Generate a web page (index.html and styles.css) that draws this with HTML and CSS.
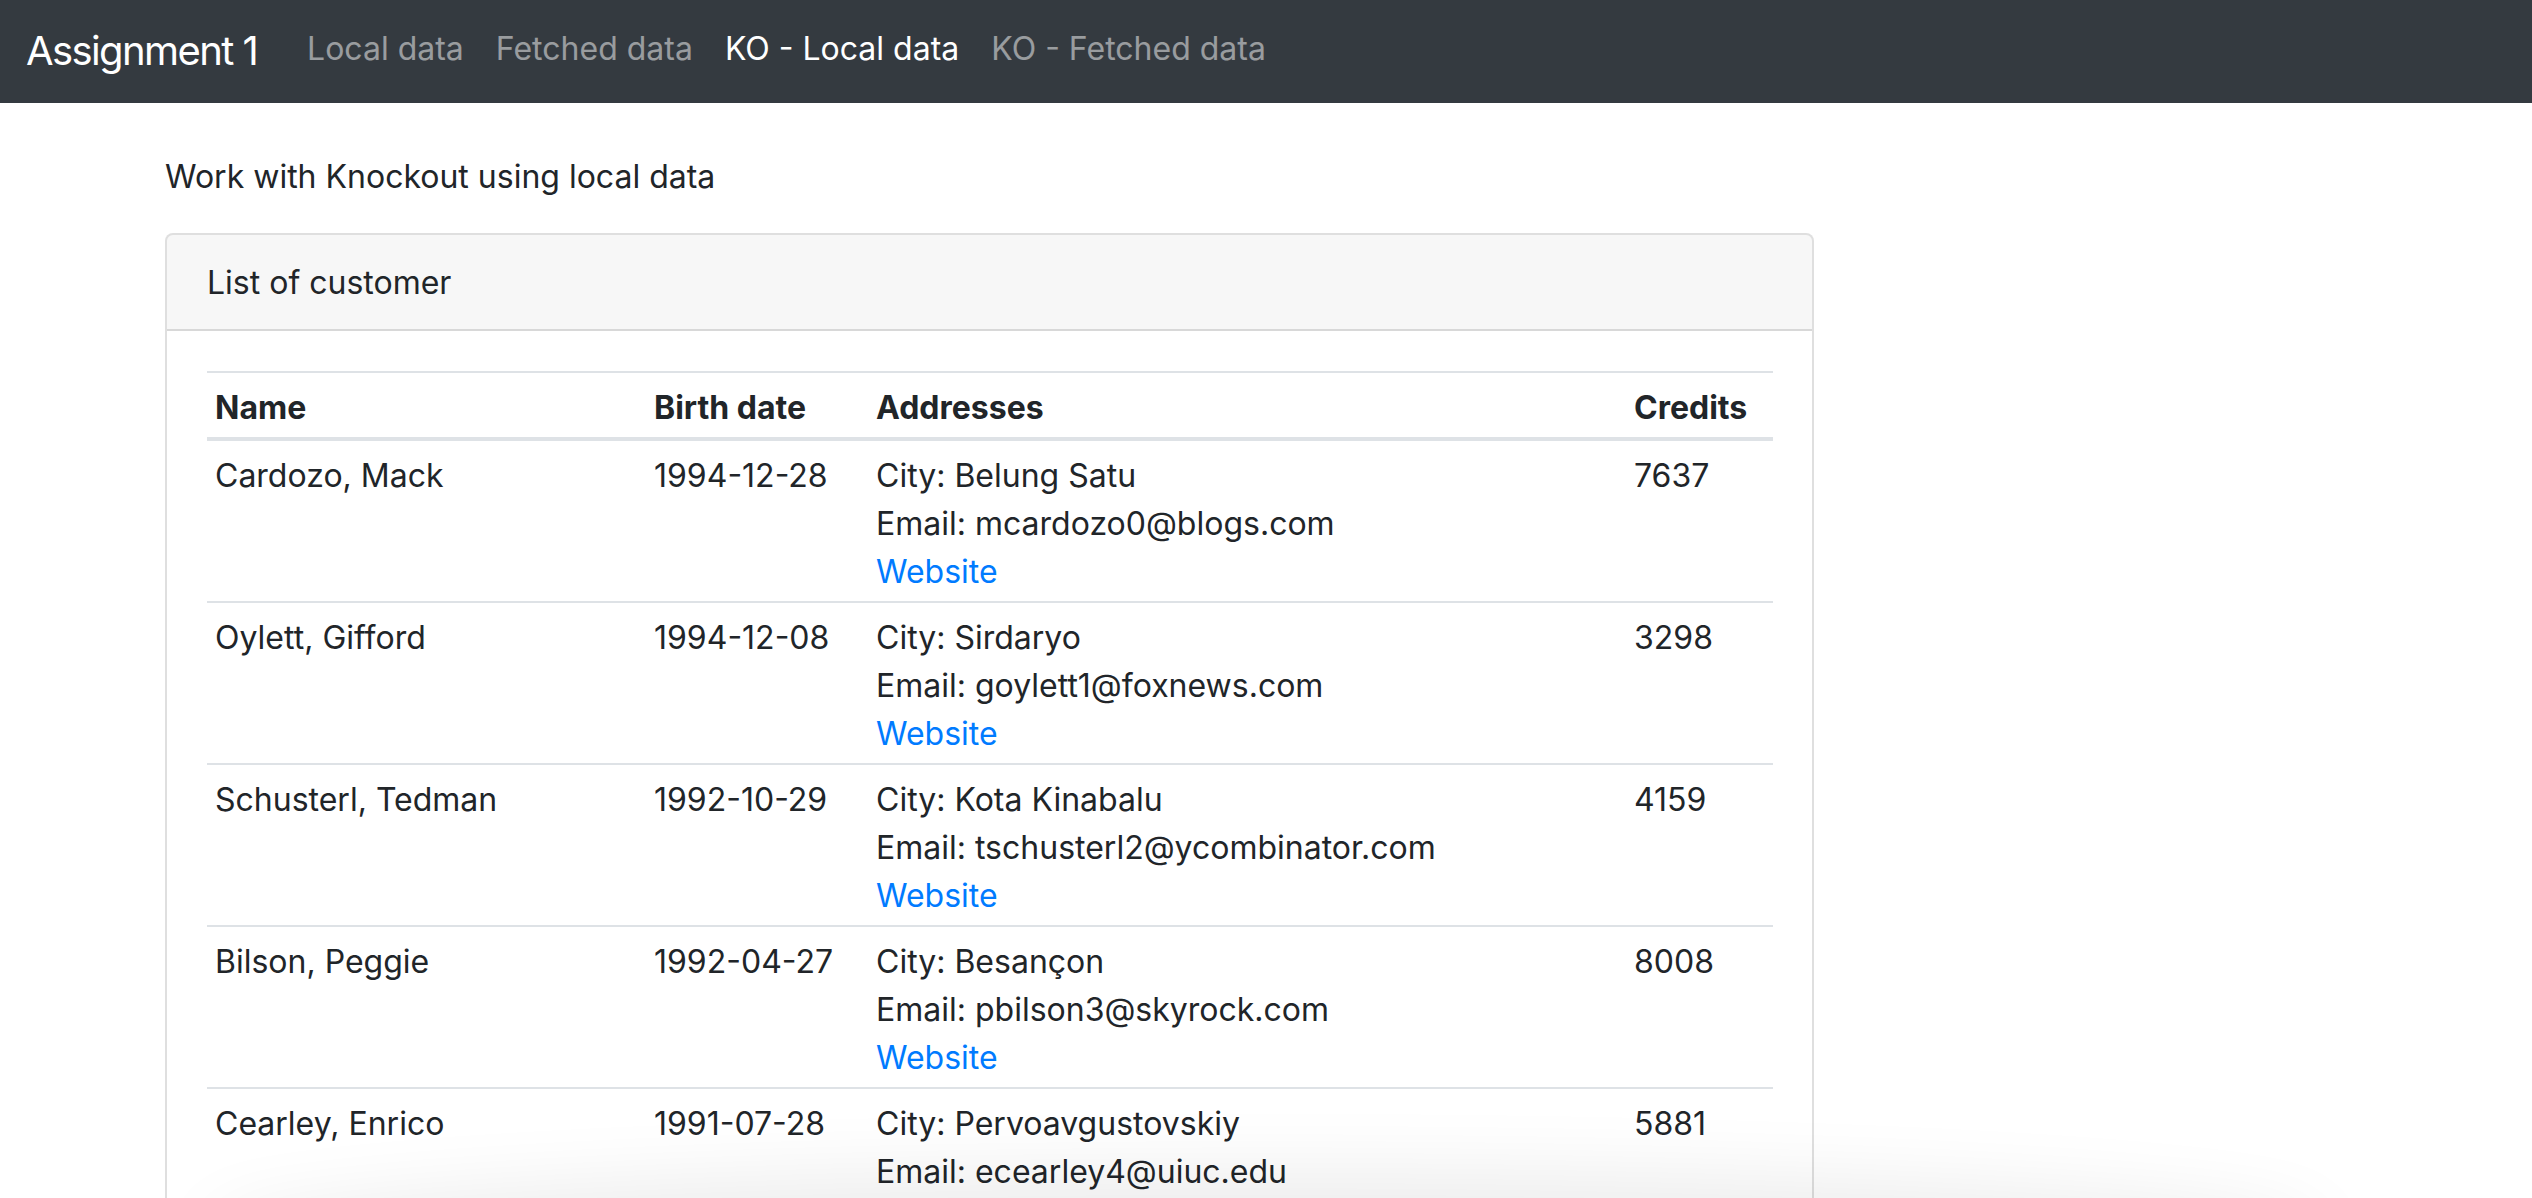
FILE: index.html
```html
<!DOCTYPE html>
<html lang="en">
<head>
<meta charset="utf-8">
<title>Assignment 1</title>
<link rel="stylesheet" href="styles.css">
</head>
<body>
<nav class="navbar">
  <a class="brand" href="#">Assignment 1</a>
  <ul class="nav">
    <li><a class="nav-link" href="#">Local data</a></li>
    <li><a class="nav-link" href="#">Fetched data</a></li>
    <li><a class="nav-link active" href="#">KO - Local data</a></li>
    <li><a class="nav-link" href="#">KO - Fetched data</a></li>
  </ul>
</nav>
<main class="container">
  <p class="intro">Work with Knockout using local data</p>
  <div class="card">
    <div class="card-header">List of customer</div>
    <div class="card-body">
      <table class="table">
        <colgroup>
          <col class="c-name"><col class="c-birth"><col class="c-addr"><col class="c-credit">
        </colgroup>
        <thead>
          <tr><th>Name</th><th>Birth date</th><th>Addresses</th><th>Credits</th></tr>
        </thead>
        <tbody>
          <tr>
            <td>Cardozo, Mack</td><td>1994-12-28</td>
            <td><div>City: Belung Satu</div><div>Email: mcardozo0@blogs.com</div><a class="link" href="#">Website</a></td>
            <td>7637</td>
          </tr>
          <tr>
            <td>Oylett, Gifford</td><td>1994-12-08</td>
            <td><div>City: Sirdaryo</div><div>Email: goylett1@foxnews.com</div><a class="link" href="#">Website</a></td>
            <td>3298</td>
          </tr>
          <tr>
            <td>Schusterl, Tedman</td><td>1992-10-29</td>
            <td><div>City: Kota Kinabalu</div><div>Email: tschusterl2@ycombinator.com</div><a class="link" href="#">Website</a></td>
            <td>4159</td>
          </tr>
          <tr>
            <td>Bilson, Peggie</td><td>1992-04-27</td>
            <td><div>City: Besançon</div><div>Email: pbilson3@skyrock.com</div><a class="link" href="#">Website</a></td>
            <td>8008</td>
          </tr>
          <tr>
            <td>Cearley, Enrico</td><td>1991-07-28</td>
            <td><div>City: Pervoavgustovskiy</div><div>Email: ecearley4@uiuc.edu</div><a class="link" href="#">Website</a></td>
            <td>5881</td>
          </tr>
        </tbody>
      </table>
    </div>
  </div>
</main>
<div class="bottom-shade"></div>
</body>
</html>
```
FILE: styles.css
```css
html, body {
  margin: 0;
  padding: 0;
}
body {
  font-family: Inter, "Noto Sans", "Liberation Sans", sans-serif;
  font-size: 32px;
  line-height: 48px;
  color: #212529;
  background: #fff;
  overflow: hidden;
}
.navbar {
  display: flex;
  align-items: center;
  height: 103px;
  box-sizing: border-box;
  padding-left: 26px;
  background: #343a40;
}
.brand {
  font-size: 40px;
  line-height: 60px;
  letter-spacing: -1.6px;
  color: #fff;
  text-decoration: none;
  margin-right: 34px;
  padding-bottom: 2px;
}
.nav {
  display: flex;
  list-style: none;
  margin: 0;
  padding: 0;
}
.nav-link {
  display: block;
  padding: 0 16px 6px;
  color: rgba(255, 255, 255, 0.5);
  text-decoration: none;
  letter-spacing: 0;
}
.nav-link.active {
  color: #fff;
}
.container {
  margin-left: 165px;
  width: 1649px;
  padding-top: 50px;
}
.intro {
  margin: 0 0 32px;
}
.card {
  border: 2px solid rgba(0, 0, 0, 0.125);
  border-radius: 8px;
  background: #fff;
}
.card-header {
  padding: 24px 40px 22px;
  background: rgba(0, 0, 0, 0.03);
  border-bottom: 2px solid rgba(0, 0, 0, 0.125);
  border-radius: 6px 6px 0 0;
}
.card-body {
  padding: 40px;
}
.table {
  width: 100%;
  border-collapse: collapse;
  table-layout: fixed;
}
.c-name { width: 439px; }
.c-birth { width: 222px; }
.c-addr { width: 758px; }
.c-credit { width: 147px; }
.table th,
.table td {
  padding: 11px 8px 5px;
  text-align: left;
  vertical-align: top;
  border-top: 2px solid #dee2e6;
  white-space: nowrap;
}
.table th {
  font-weight: 700;
  border-bottom: 4px solid #dee2e6;
}
.link {
  color: #007bff;
  text-decoration: none;
}
.bottom-shade {
  position: fixed;
  left: 230px;
  right: 230px;
  bottom: -70px;
  height: 70px;
  border-radius: 50%;
  box-shadow: 0 0 70px 30px rgba(0, 0, 0, 0.07);
  background: rgba(0, 0, 0, 0.07);
}
```
